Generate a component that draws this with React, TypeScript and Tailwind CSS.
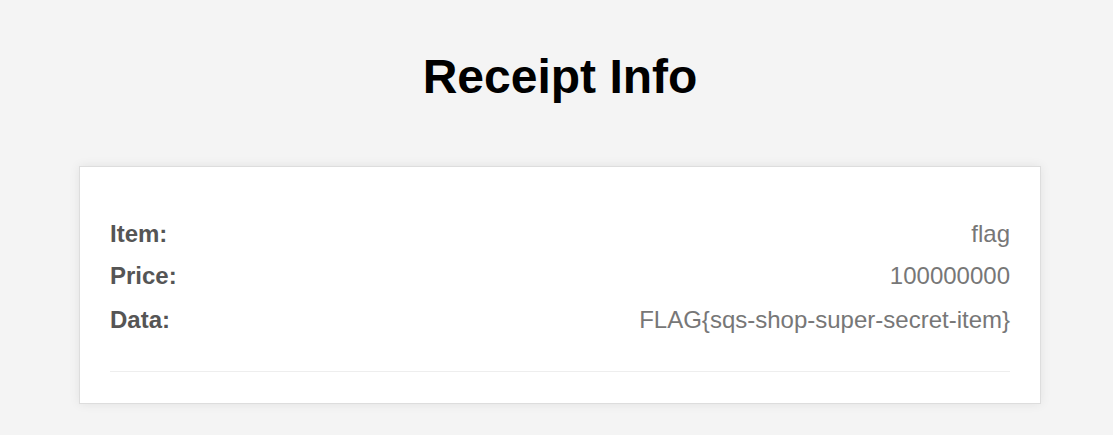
import React from 'react';

const rows = [
  { label: 'Item:', value: 'flag', gap: '' },
  { label: 'Price:', value: '100000000', gap: 'mt-[14px]' },
  { label: 'Data:', value: 'FLAG{sqs-shop-super-secret-item}', gap: 'mt-[16px]' },
];

export default function App() {
  return (
    <div className="min-h-[435px] bg-[#f4f4f4] font-['Liberation_Sans',Arial,sans-serif]">
      <div className="ml-[79px] w-[962px] pt-[48px]">
        <h1 className="text-center text-[48px] font-bold leading-[58px] text-black">Receipt Info</h1>

        {/* Receipt card */}
        <div className="mt-[60px] border border-[#dddddd] bg-white px-[30px] pb-[31px] pt-[53px] shadow-[0_0_10px_rgba(0,0,0,0.08)]">
          <div className="flex flex-col">
            {rows.map((row) => (
              <div key={row.label} className={`${row.gap} flex items-center justify-between text-[24px] leading-[28px]`}>
                <span className="font-bold text-[#555555]">{row.label}</span>
                <span className="text-[#777777]">{row.value}</span>
              </div>
            ))}
          </div>
          <div className="mt-[37px] border-t border-[#eeeeee]" />
        </div>
      </div>
    </div>
  );
}
